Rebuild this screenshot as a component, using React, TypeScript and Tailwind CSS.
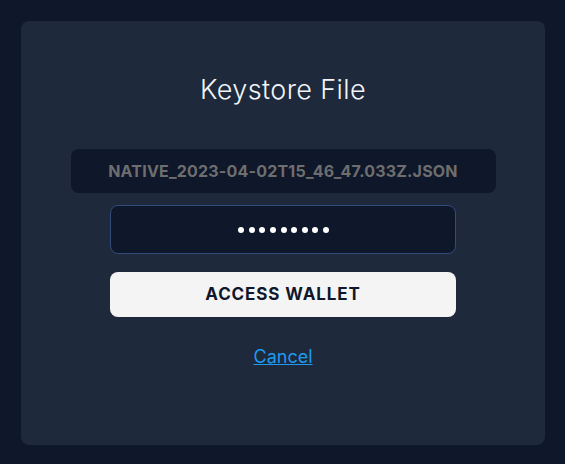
import React from "react";

export default function App() {
  return (
    <div className="w-[565px] h-[464px] bg-[#0f172a] pt-[21px] pl-[21px]" style={{ fontFamily: "Inter, 'Noto Sans', sans-serif" }}>
      <div className="w-[524px] h-[424px] bg-[#1e293b] rounded-lg flex flex-col items-center">
        <h1 className="mt-[54px] text-[27px] font-light text-[#f1f5f9] leading-[30px] tracking-[0.4px]">Keystore File</h1>
        <div className="mt-[44px] w-[425px] h-[44px] rounded-lg bg-[#0f172a] flex items-center justify-center text-[16px] font-bold text-[#6e6e6e] uppercase tracking-[0.2px]">
          NATIVE_2023-04-02T15_46_47.033Z.JSON
        </div>
        <div className="mt-[12px] w-[346px] h-[49px] rounded-lg bg-[#0f172a] border border-[#334b7d] flex items-center justify-center gap-[4.6px] pl-[1px]">
          {Array.from({ length: 9 }).map((_, i) => (
            <span key={i} className="w-[6px] h-[6px] rounded-full bg-white" />
          ))}
        </div>
        <button className="mt-[18px] w-[346px] h-[45px] rounded-lg bg-[#f4f4f5] text-[#0f172a] text-[17px] font-bold tracking-[0.9px]">
          ACCESS WALLET
        </button>
        <a href="#" className="mt-[28px] text-[18px] leading-[24px] text-[#1d9bf0] underline">Cancel</a>
      </div>
    </div>
  );
}
